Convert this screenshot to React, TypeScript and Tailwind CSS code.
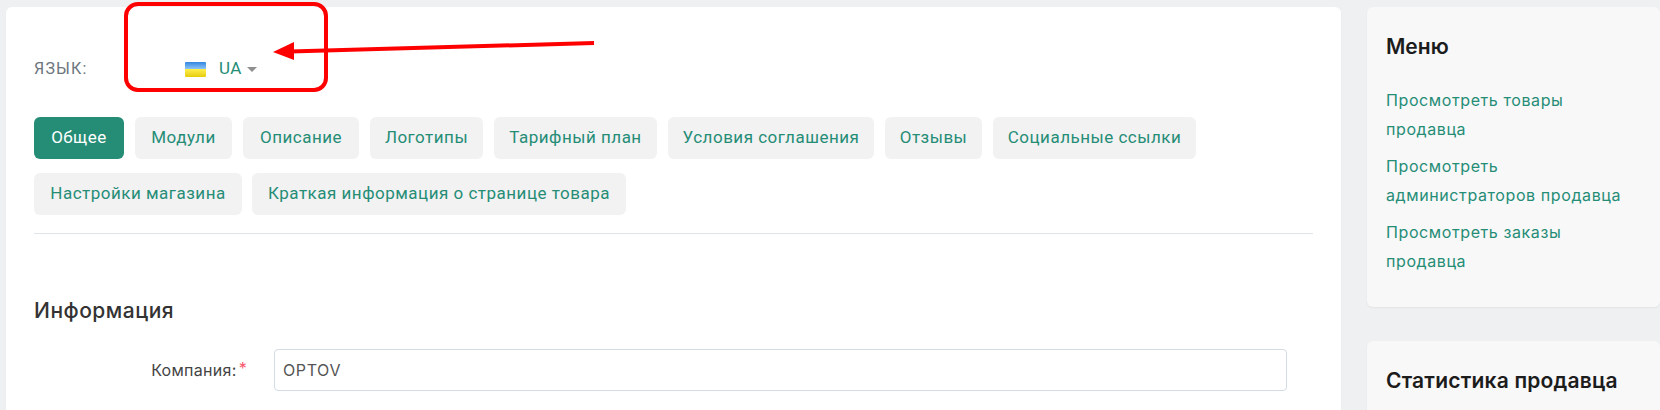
const tabsTop = [
  { label: "Общее", width: "w-[90px]" },
  { label: "Модули", width: "w-[97px]" },
  { label: "Описание", width: "w-[116px]" },
  { label: "Логотипы", width: "w-[113px]" },
  { label: "Тарифный план", width: "w-[163px]" },
  { label: "Условия соглашения", width: "w-[206px]" },
  { label: "Отзывы", width: "w-[97px]" },
  { label: "Социальные ссылки", width: "w-[203px]" },
];
const tabsBottom = [
  { label: "Настройки магазина", width: "w-[208px]" },
  { label: "Краткая информация о странице товара", width: "w-[374px]" },
];

function Tab({ label, width, active }: { label: string; width: string; active?: boolean }) {
  return (
    <a
      className={`${width} h-[42px] rounded-md flex items-center justify-center whitespace-nowrap text-[17px] tracking-[0.5px] font-['Roboto',sans-serif] ${
        active ? "bg-[#258d76] text-white" : "bg-[#f2f2f3] text-[#258d76]"
      }`}
    >
      {label}
    </a>
  );
}

function Annotation() {
  return (
    <>
      <div className="absolute left-[124px] top-[2px] w-[204px] h-[90px] border-[4px] border-[#ff0000] rounded-[14px]" />
      <svg className="absolute left-0 top-0" width="620" height="100">
        <path d="M594 43 L290 51.5" stroke="#ff0000" strokeWidth="4" fill="none" />
        <path d="M273 52 L294 42 L294 60 Z" fill="#ff0000" />
      </svg>
    </>
  );
}

function MainCard() {
  return (
    <div className="w-[1335px] h-[420px] shrink-0 bg-white rounded-md px-[28px] pt-[50px] shadow-[0_1px_2px_rgba(0,0,0,0.04)]">
      <div className="flex items-center h-[24px] font-['Roboto',sans-serif]">
        <span className="w-[151px] text-[16px] tracking-[1.2px] text-[#6c757d]">ЯЗЫК:</span>
        <span className="w-[21px] h-[15px] rounded-[1px] overflow-hidden flex flex-col">
          <span className="h-1/2 bg-gradient-to-b from-[#2f86e0] to-[#8cc4f5]" />
          <span className="h-1/2 bg-gradient-to-b from-[#fff04a] to-[#e6cc00]" />
        </span>
        <span className="ml-[13px] text-[17px] tracking-[0.3px] text-[#258d76]">UA</span>
        <span className="ml-[5px] w-0 h-0 border-x-[5px] border-x-transparent border-t-[5px] border-t-[#8f8f8f]" />
      </div>

      <div className="mt-[36px] flex gap-[11px]">
        {tabsTop.map((t, i) => (
          <Tab key={t.label} label={t.label} width={t.width} active={i === 0} />
        ))}
      </div>
      <div className="mt-[14px] flex gap-[10px]">
        {tabsBottom.map((t) => (
          <Tab key={t.label} label={t.label} width={t.width} />
        ))}
      </div>

      <div className="mt-[18px] h-px w-[1279px] bg-[#dfe6ea]" />

      <h3 className="mt-[63px] text-[21px] leading-[28px] tracking-[0.5px] font-medium text-[#333333] font-['Inter',sans-serif]">Информация</h3>

      <div className="mt-[24px] flex items-center font-['Inter',sans-serif]">
        <label className="w-[240px] pr-[27px] text-right text-[16px] tracking-[0.3px] text-[#444444] whitespace-nowrap">
          Компания:<span className="text-[#f7566c] ml-[2px] relative -top-[2px]">*</span>
        </label>
        <input
          readOnly
          value="OPTOV"
          className="w-[1013px] h-[42px] px-[8px] border border-[#d3dce4] rounded-[4px] text-[16px] tracking-[0.6px] text-[#555555] outline-none"
        />
      </div>
    </div>
  );
}

function Sidebar() {
  return (
    <div className="flex-1 flex flex-col gap-[34px] font-['Inter',sans-serif]">
      <div className="h-[300px] shrink-0 bg-[#f8f8f9] rounded-md pl-[19px] pt-[28px] shadow-[0_1px_2px_rgba(0,0,0,0.05)]">
        <h3 className="text-[21px] leading-[24px] font-semibold text-[#1c1c1c]">Меню</h3>
        <div className="mt-[27px] flex flex-col gap-[8px] w-[245px] text-[16px] leading-[29px] tracking-[0.6px] text-[#258d76]">
          <a>Просмотреть товары продавца</a>
          <a>Просмотреть администраторов продавца</a>
          <a>Просмотреть заказы продавца</a>
        </div>
      </div>
      <div className="h-[100px] shrink-0 bg-[#f8f8f9] rounded-md pl-[19px] pt-[28px] shadow-[0_1px_2px_rgba(0,0,0,0.05)]">
        <h3 className="text-[21px] leading-[24px] tracking-[0.2px] font-semibold text-[#1c1c1c]">Статистика продавца</h3>
      </div>
    </div>
  );
}

export default function App() {
  return (
    <div className="relative h-[410px] w-[1660px] overflow-hidden bg-[#eff0f2] pl-[6px] pt-[7px] flex gap-[26px]">
      <MainCard />
      <Sidebar />
      <Annotation />
    </div>
  );
}
